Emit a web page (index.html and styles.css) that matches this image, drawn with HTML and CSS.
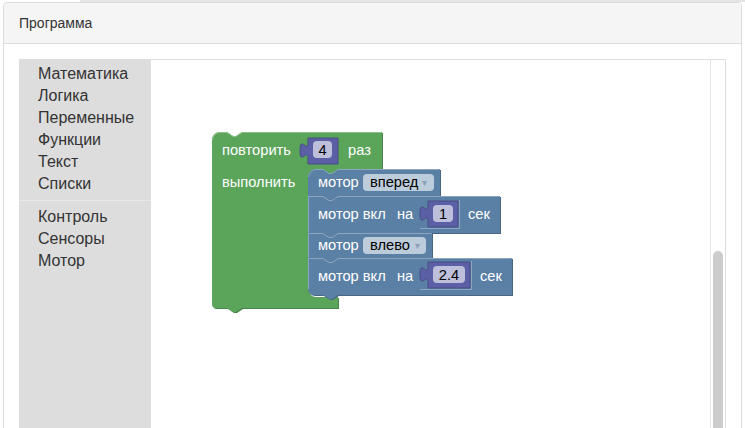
FILE: index.html
```html
<!DOCTYPE html>
<html lang="ru">
<head>
<meta charset="utf-8">
<title>Программа</title>
<link rel="stylesheet" href="styles.css">
</head>
<body>
<div class="topline"></div>
<div class="page">
  <div class="panel">
    <div class="panel-heading">Программа</div>
    <div class="panel-body">
      <div class="blockly">
        <div class="toolbox">
          <div class="row">Математика</div>
          <div class="row">Логика</div>
          <div class="row">Переменные</div>
          <div class="row">Функции</div>
          <div class="row">Текст</div>
          <div class="row">Списки</div>
          <div class="sep"></div>
          <div class="row">Контроль</div>
          <div class="row">Сенсоры</div>
          <div class="row">Мотор</div>
        </div>
        <div class="ws">
          <svg class="canvas" width="560" height="370" viewBox="0 0 560 370">
            <g transform="translate(-151 -59)">
              <!-- repeat block -->
              <path class="g-dark" transform="translate(1 1)" d="M212,139 A8,8 0 0,1 220,131 H227 l6,4 3,0 6,-4 H382 V168 H338 l-6,4 -3,0 -6,-4 H316 a8,8 0 0,0 -8,8 V288 a8,8 0 0,0 8,8 H338 V307 H242 l-6,4 -3,0 -6,-4 H216 a4,4 0 0,1 -4,-4 Z"/>
              <path class="g-main" d="M212,139 A8,8 0 0,1 220,131 H227 l6,4 3,0 6,-4 H382 V168 H338 l-6,4 -3,0 -6,-4 H316 a8,8 0 0,0 -8,8 V288 a8,8 0 0,0 8,8 H338 V307 H242 l-6,4 -3,0 -6,-4 H216 a4,4 0 0,1 -4,-4 Z"/>
              <path class="g-light" d="M212.5,139 A7.5,7.5 0 0,1 220,131.5 H227 l6,4 3,0 6,-4 H381.5"/>
              <text class="bt" x="222" y="154">повторить</text>
              <path class="p-main" d="M308,137 H338 V163 H308 V157 c0,-10 -8,8 -8,-7.5 s8,2.5 8,-7.5 Z"/>
              <rect class="fld" x="313" y="140" width="19" height="17" rx="4"/>
              <text class="ft" x="322.5" y="154" text-anchor="middle">4</text>
              <text class="bt" x="348" y="154">раз</text>
              <text class="bt" x="222" y="186">выполнить</text>

              <!-- motor forward -->
              <path class="b-dark" transform="translate(1 1)" d="M308,176 a8,8 0 0,1 8,-8 H323 l6,4 3,0 6,-4 H440 V195 H338 l-6,4 -3,0 -6,-4 H308 Z"/>
              <path class="b-main" d="M308,176 a8,8 0 0,1 8,-8 H323 l6,4 3,0 6,-4 H440 V195 H338 l-6,4 -3,0 -6,-4 H308 Z"/>
              <path class="b-light" d="M308.5,176 a7.5,7.5 0 0,1 7.5,-7.5 H323 l6,4 3,0 6,-4 H439.5"/>
              <text class="bt" x="318" y="186">мотор</text>
              <rect class="fld" x="363" y="173" width="71" height="17" rx="4"/>
              <text class="ft" x="370" y="186">вперед</text>
              <text class="arr" x="422" y="185">▾</text>

              <!-- motor on 1 sec -->
              <path class="b-dark" transform="translate(1 1)" d="M308,195 H323 l6,4 3,0 6,-4 H500 V232 H338 l-6,4 -3,0 -6,-4 H308 Z"/>
              <path class="b-main" d="M308,195 H323 l6,4 3,0 6,-4 H500 V232 H338 l-6,4 -3,0 -6,-4 H308 Z"/>
              <path class="b-light" d="M308.5,231.5 V195.5 H323 l6,4 3,0 6,-4 H499.5"/>
              <text class="bt" x="318" y="218">мотор вкл</text>
              <text class="bt" x="397" y="218">на</text>
              <path class="sock-l" d="M420,227.5 H459.5 V199"/>
              <path class="p-main" d="M428,200 H458 V226 H428 V220 c0,-10 -8,8 -8,-7.5 s8,2.5 8,-7.5 Z"/>
              <rect class="fld" x="433" y="204" width="20" height="17" rx="4"/>
              <text class="ft" x="443" y="218" text-anchor="middle">1</text>
              <text class="bt" x="468" y="218">сек</text>

              <!-- motor left -->
              <path class="b-dark" transform="translate(1 1)" d="M308,232 H323 l6,4 3,0 6,-4 H432 V257 H338 l-6,4 -3,0 -6,-4 H308 Z"/>
              <path class="b-main" d="M308,232 H323 l6,4 3,0 6,-4 H432 V257 H338 l-6,4 -3,0 -6,-4 H308 Z"/>
              <path class="b-light" d="M308.5,256.5 V232.5 H323 l6,4 3,0 6,-4 H431.5"/>
              <text class="bt" x="318" y="249">мотор</text>
              <rect class="fld" x="363" y="236" width="63" height="17" rx="4"/>
              <text class="ft" x="370" y="249">влево</text>
              <text class="arr" x="415" y="248">▾</text>

              <!-- motor on 2.4 sec -->
              <path class="b-dark" transform="translate(1 1)" d="M308,257 H323 l6,4 3,0 6,-4 H512 V294 H338 l-6,4 -3,0 -6,-4 H314 a6,6 0 0,1 -6,-6 Z"/>
              <path class="b-main" d="M308,257 H323 l6,4 3,0 6,-4 H512 V294 H338 l-6,4 -3,0 -6,-4 H314 a6,6 0 0,1 -6,-6 Z"/>
              <path class="b-light" d="M308.5,288 V257.5 H323 l6,4 3,0 6,-4 H511.5"/>
              <text class="bt" x="318" y="280">мотор вкл</text>
              <text class="bt" x="397" y="280">на</text>
              <path class="sock-l" d="M420,288.5 H471.5 V260"/>
              <path class="p-main" d="M428,261 H470 V287 H428 V281 c0,-10 -8,8 -8,-7.5 s8,2.5 8,-7.5 Z"/>
              <rect class="fld" x="433" y="265" width="32" height="17" rx="4"/>
              <text class="ft" x="449" y="279" text-anchor="middle">2.4</text>
              <text class="bt" x="480" y="280">сек</text>
            </g>
          </svg>
          <div class="vscroll"><div class="thumb"></div></div>
        </div>
      </div>
    </div>
  </div>
</div>
</body>
</html>
```
FILE: styles.css
```css
html, body {
  margin: 0;
  padding: 0;
  background: #fff;
  overflow: hidden;
  height: 100%;
}
body {
  font-family: "Liberation Sans", Arial, sans-serif;
  color: #333;
}
.topline {
  height: 2px;
  margin-left: 80px;
  background: #e4e4e4;
}
.page {
  padding: 0 3px;
}
.panel {
  border: 1px solid #ddd;
  border-radius: 4px;
  background: #fff;
  height: 460px;
  overflow: hidden;
}
.panel-heading {
  background: #f5f5f5;
  border-bottom: 1px solid #ddd;
  padding: 10px 15px;
  font-size: 14px;
  line-height: 20px;
  color: #333;
}
.panel-body {
  padding: 15px;
}
.blockly {
  display: flex;
  height: 400px;
}
.toolbox {
  width: 132px;
  flex: none;
  background: #ddd;
  padding-top: 4px;
  box-sizing: border-box;
}
.row {
  height: 22px;
  line-height: 22px;
  font-size: 16px;
  padding-left: 19px;
  color: #333;
  white-space: nowrap;
}
.sep {
  border-bottom: 1px solid #e8e8e8;
  margin: 5px 0;
}
.ws {
  flex: 1;
  position: relative;
  border-top: 1px solid #ddd;
  border-right: 1px solid #ddd;
  background: #fff;
}
.canvas {
  position: absolute;
  left: 0;
  top: 0;
}
.vscroll {
  position: absolute;
  top: 0;
  right: 0;
  bottom: 0;
  width: 14px;
  border-left: 1px solid #e4e4e4;
  background: #fff;
}
.thumb {
  position: absolute;
  left: 2px;
  top: 191px;
  bottom: 0;
  width: 10px;
  background: #ccc;
  border-radius: 5px 5px 0 0;
}
.g-main { fill: #5ba55b; }
.g-dark { fill: #498449; }
.g-light { fill: none; stroke: #8cc08c; stroke-width: 1; }
.b-main { fill: #5b80a5; }
.b-dark { fill: #496684; }
.b-light { fill: none; stroke: #8ca6c0; stroke-width: 1; }
.p-main { fill: #5b5fa5; stroke: #494d84; stroke-width: 1; }
.sock-l { fill: none; stroke: #8ca6c0; stroke-width: 1; }
.fld { fill: #fff; fill-opacity: 0.6; }
.bt {
  fill: #fff;
  font-family: "Liberation Sans", Arial, sans-serif;
  font-size: 11pt;
}
.ft {
  fill: #000;
  font-family: "Liberation Sans", Arial, sans-serif;
  font-size: 11pt;
}
.arr {
  fill: #8ca0b8;
  font-family: "DejaVu Sans", sans-serif;
  font-size: 10px;
}
```
